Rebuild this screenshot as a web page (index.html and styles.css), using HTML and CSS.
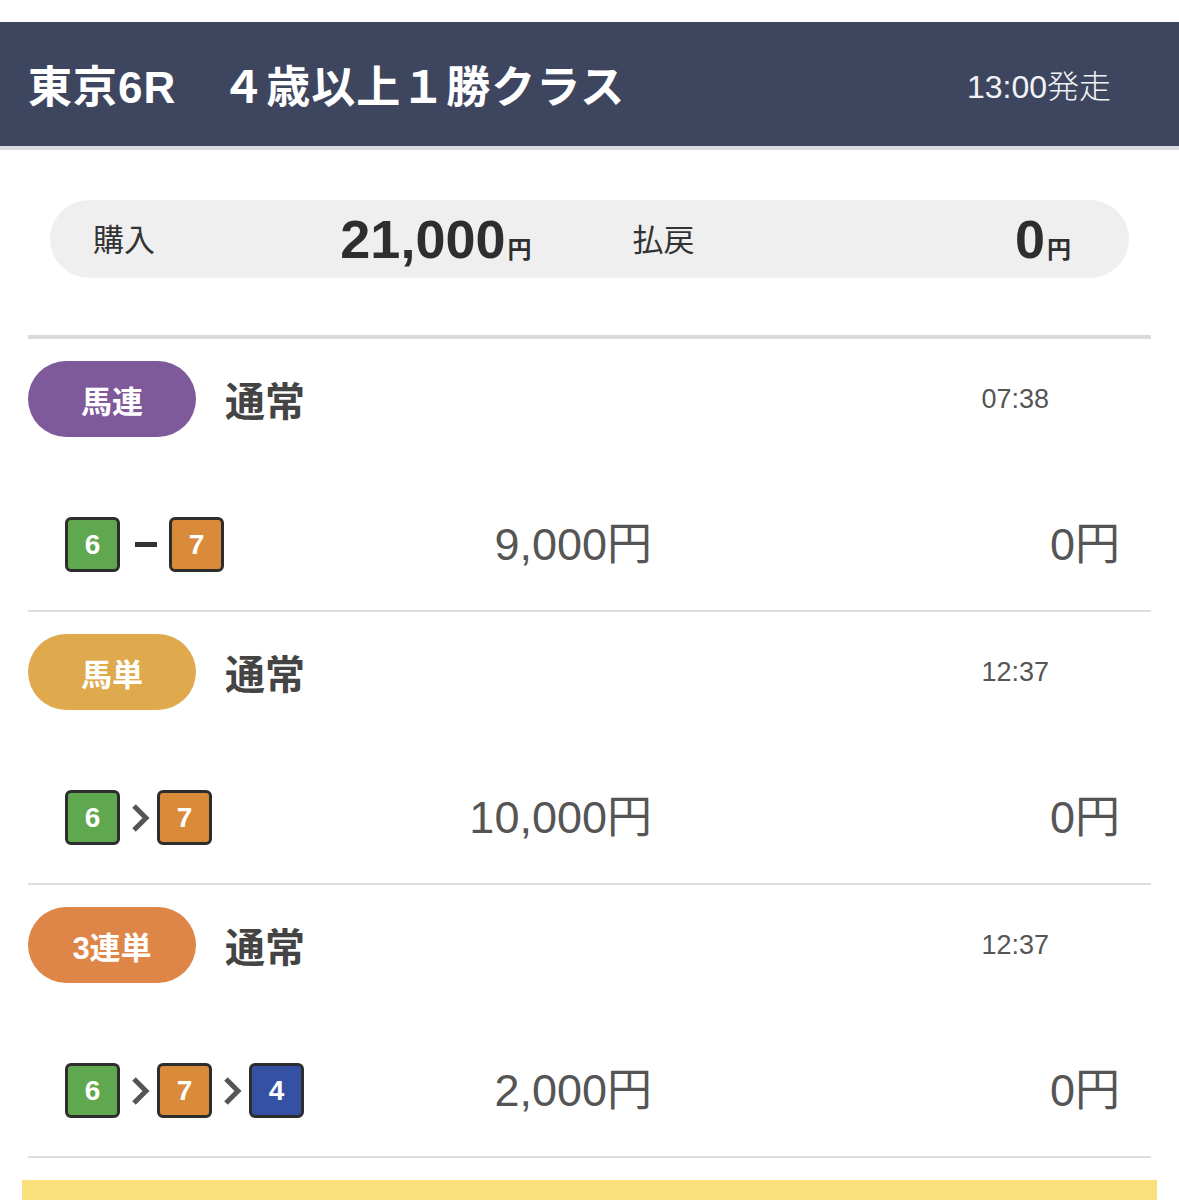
FILE: index.html
```html
<!DOCTYPE html>
<html lang="ja">
<head>
  <meta charset="UTF-8" />
  <meta name="viewport" content="width=device-width, initial-scale=1" />
  <title>東京6R 購入履歴</title>
  <link rel="stylesheet" href="styles.css">
</head>
<body>
  <header class="race-header">
    <h1 class="race-title">東京6R　４歳以上１勝クラス</h1>
    <span class="race-start">13:00発走</span>
  </header>

  <div class="summary">
    <div class="summary-cell">
      <span class="summary-label">購入</span>
      <span class="summary-value">21,000<small>円</small></span>
    </div>
    <div class="summary-cell">
      <span class="summary-label">払戻</span>
      <span class="summary-value">0<small>円</small></span>
    </div>
  </div>

  <div class="bets">
    <section class="bet">
      <div class="bet-head">
        <span class="bet-type type-umaren">馬連</span>
        <span class="bet-kind">通常</span>
        <span class="bet-time">07:38</span>
      </div>
      <div class="bet-row">
        <div class="horses">
          <span class="horse waku-6">6</span>
          <span class="sep-dash"></span>
          <span class="horse waku-7">7</span>
        </div>
        <span class="bet-amount">9,000円</span>
        <span class="bet-payout">0円</span>
      </div>
    </section>

    <section class="bet">
      <div class="bet-head">
        <span class="bet-type type-umatan">馬単</span>
        <span class="bet-kind">通常</span>
        <span class="bet-time">12:37</span>
      </div>
      <div class="bet-row">
        <div class="horses">
          <span class="horse waku-6">6</span>
          <svg class="sep-arrow" viewBox="0 0 20 30"><path d="M4 3 L16 15 L4 27" /></svg>
          <span class="horse waku-7">7</span>
        </div>
        <span class="bet-amount">10,000円</span>
        <span class="bet-payout">0円</span>
      </div>
    </section>

    <section class="bet">
      <div class="bet-head">
        <span class="bet-type type-sanrentan">3連単</span>
        <span class="bet-kind">通常</span>
        <span class="bet-time">12:37</span>
      </div>
      <div class="bet-row">
        <div class="horses">
          <span class="horse waku-6">6</span>
          <svg class="sep-arrow" viewBox="0 0 20 30"><path d="M4 3 L16 15 L4 27" /></svg>
          <span class="horse waku-7">7</span>
          <svg class="sep-arrow" viewBox="0 0 20 30"><path d="M4 3 L16 15 L4 27" /></svg>
          <span class="horse waku-4">4</span>
        </div>
        <span class="bet-amount">2,000円</span>
        <span class="bet-payout">0円</span>
      </div>
    </section>
  </div>

  <div class="notice-bar"></div>
</body>
</html>
```

FILE: styles.css
```css
html {
  overflow: hidden;
}

body {
  margin: 0;
  padding-top: 22px;
  background: #fff;
  font-family: "Liberation Sans", "Noto Sans CJK JP", sans-serif;
  color: #333;
}

/* Race header bar */
.race-header {
  height: 124px;
  background: #3e465f;
  display: flex;
  align-items: center;
  justify-content: space-between;
  padding: 0 66px 0 28px;
  border-bottom: 4px solid #d9dce2;
}

.race-title {
  margin: 0;
  font-size: 44px;
  font-weight: 700;
  color: #fff;
  letter-spacing: 1px;
}

.race-start {
  font-size: 32px;
  font-weight: 300;
  color: #f2f3f6;
  margin-right: 2px;
}

/* Purchase / payout pill */
.summary {
  margin: 50px 50px 0;
  height: 78px;
  border-radius: 39px;
  background: #efefef;
  display: grid;
  grid-template-columns: 1fr 1fr;
}

.summary-cell {
  display: flex;
  align-items: center;
  justify-content: space-between;
  padding: 0 58px 0 43px;
}

.summary-label {
  font-size: 31px;
  color: #333;
  margin-top: -4px;
}

.summary-value {
  font-size: 54px;
  font-weight: 700;
  color: #2e2e2e;
  line-height: 1;
}

.summary-value small {
  font-size: 24px;
  margin-left: 2px;
}

/* Bet list */
.bets {
  margin: 57px 28px 0;
  border-top: 4px solid #dadada;
}

.bet {
  padding: 22px 0 38px;
  border-bottom: 2px solid #dedede;
}

.bet-head {
  display: flex;
  align-items: center;
  height: 76px;
}

.bet-type {
  width: 168px;
  height: 76px;
  border-radius: 38px;
  display: flex;
  align-items: center;
  justify-content: center;
  color: #fff;
  font-size: 31px;
  font-weight: 700;
}

.type-umaren { background: #7f5a9a; }
.type-umatan { background: #dfa94e; }
.type-sanrentan { background: #de8548; }

.bet-kind {
  margin-left: 29px;
  font-size: 40px;
  font-weight: 700;
  color: #444;
}

.bet-time {
  margin-left: auto;
  margin-right: 102px;
  font-size: 27px;
  color: #555;
}

.bet-row {
  margin-top: 80px;
  height: 55px;
  display: grid;
  grid-template-columns: 300px 287px 1fr;
  align-items: center;
  padding: 0 31px 0 37px;
}

.horses {
  display: flex;
  align-items: center;
}

.horse {
  width: 49px;
  height: 49px;
  border: 3px solid #2d2d2d;
  border-radius: 6px;
  display: flex;
  align-items: center;
  justify-content: center;
  color: #fff;
  font-size: 28px;
  font-weight: 700;
  line-height: 1;
}

.waku-6 { background: #5fa84f; }
.waku-7 { background: #d98b3a; }
.waku-4 { background: #3551a3; }

.sep-dash {
  width: 22px;
  height: 5px;
  background: #333;
  margin: 0 12px 0 15px;
}

.sep-arrow {
  width: 20px;
  height: 30px;
  margin: 0 7px 0 10px;
}

.sep-arrow path {
  fill: none;
  stroke: #555;
  stroke-width: 5;
}

.bet-amount,
.bet-payout {
  text-align: right;
  font-size: 45px;
  line-height: 1;
  color: #555;
}

/* Yellow bar at the bottom */
.notice-bar {
  margin: 22px 22px 0;
  height: 40px;
  background: #f9e07a;
}
```
